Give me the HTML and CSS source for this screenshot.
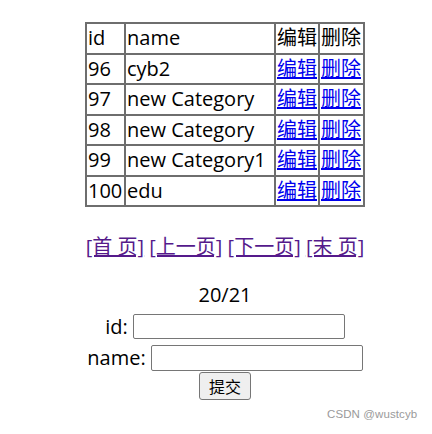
FILE: index.html
```html
<!DOCTYPE html>
<html>
<head>
<meta charset="utf-8">
<link rel="stylesheet" href="styles.css">
</head>
<body>
<div class="page">
  <table class="grid">
    <tr><th class="c-id">id</th><th class="c-name">name</th><th class="c-edit">编辑</th><th class="c-del">删除</th></tr>
    <tr><td>96</td><td>cyb2</td><td><a href="#e">编辑</a></td><td><a href="#d">删除</a></td></tr>
    <tr><td>97</td><td>new Category</td><td><a href="#e">编辑</a></td><td><a href="#d">删除</a></td></tr>
    <tr><td>98</td><td>new Category</td><td><a href="#e">编辑</a></td><td><a href="#d">删除</a></td></tr>
    <tr><td>99</td><td>new Category1</td><td><a href="#e">编辑</a></td><td><a href="#d">删除</a></td></tr>
    <tr><td>100</td><td>edu</td><td><a href="#e">编辑</a></td><td><a href="#d">删除</a></td></tr>
  </table>
  <div class="pager">
    <a class="visited" href="#first">[首 页]</a> <a class="visited" href="#prev">[上一页]</a> <a class="visited" href="#next">[下一页]</a> <a class="visited" href="#last">[末 页]</a>
  </div>
  <div class="count">20/21</div>
  <form class="form">
    <div class="field f-id"><label>id:</label><input class="box" type="text"></div>
    <div class="field f-name"><label>name:</label><input class="box" type="text"></div>
    <div class="field f-btn"><button class="submit" type="button">提交</button></div>
  </form>
</div>
<div class="mark">CSDN @wustcyb</div>
</body>
</html>
```
FILE: styles.css
```css
html, body {
  margin: 0;
  padding: 0;
  background: #fff;
}
body {
  font-family: "Open Sans", "Noto Sans CJK SC", sans-serif;
  font-size: 20px;
  color: #000;
  position: relative;
  width: 432px;
  height: 434px;
  overflow: hidden;
}
.page {
  width: 414px;
  margin-left: 18px;
  padding-top: 22px;
  text-align: center;
}
.grid {
  border-collapse: separate;
  border-spacing: 0;
  border: 1px solid #6e6e6e;
  table-layout: fixed;
  width: 280px;
  margin: 0 auto;
  text-align: left;
}
.grid th, .grid td {
  border: 1px solid #6e6e6e;
  padding: 1px 1px;
  line-height: 26.5px;
  font-weight: normal;
  white-space: nowrap;
  overflow: visible;
}
.c-id { width: 35px; }
.c-name { width: 146px; }
.c-edit { width: 40px; }
.c-del { width: 41px; }
.grid a {
  color: #0000ee;
  text-decoration: underline;
}
.pager {
  margin-top: 26px;
  line-height: 27px;
  white-space: nowrap;
}
.pager a {
  color: #551a8b;
  text-decoration: underline;
}
.count {
  margin-top: 21px;
  line-height: 27px;
}
.form {
  margin: 0;
  display: flex;
  flex-direction: column;
  align-items: center;
}
.field {
  display: flex;
  align-items: center;
  justify-content: center;
}
.field label {
  line-height: 27px;
  margin-right: 5px;
}
.f-id { margin-top: 5px; }
.f-name { margin-top: 4px; }
.f-btn { margin-top: 1px; }
.box {
  box-sizing: border-box;
  width: 212px;
  height: 25px;
  border: 1px solid #767676;
  border-radius: 2px;
  padding: 1px 2px;
  font-size: 13px;
  background: #fff;
}
.f-name .box { height: 26px; }
.submit {
  box-sizing: border-box;
  width: 52px;
  height: 28px;
  border: 1px solid #767676;
  border-radius: 3px;
  background: #efefef;
  font-family: "Noto Sans CJK SC", sans-serif;
  font-size: 16px;
  color: #000;
  padding: 0;
  line-height: 24px;
}
.mark {
  position: absolute;
  left: 327px;
  top: 408px;
  font-family: "Liberation Sans", "Noto Sans", sans-serif;
  font-size: 11.5px;
  color: #9a9a9a;
  letter-spacing: 0.1px;
}
```
